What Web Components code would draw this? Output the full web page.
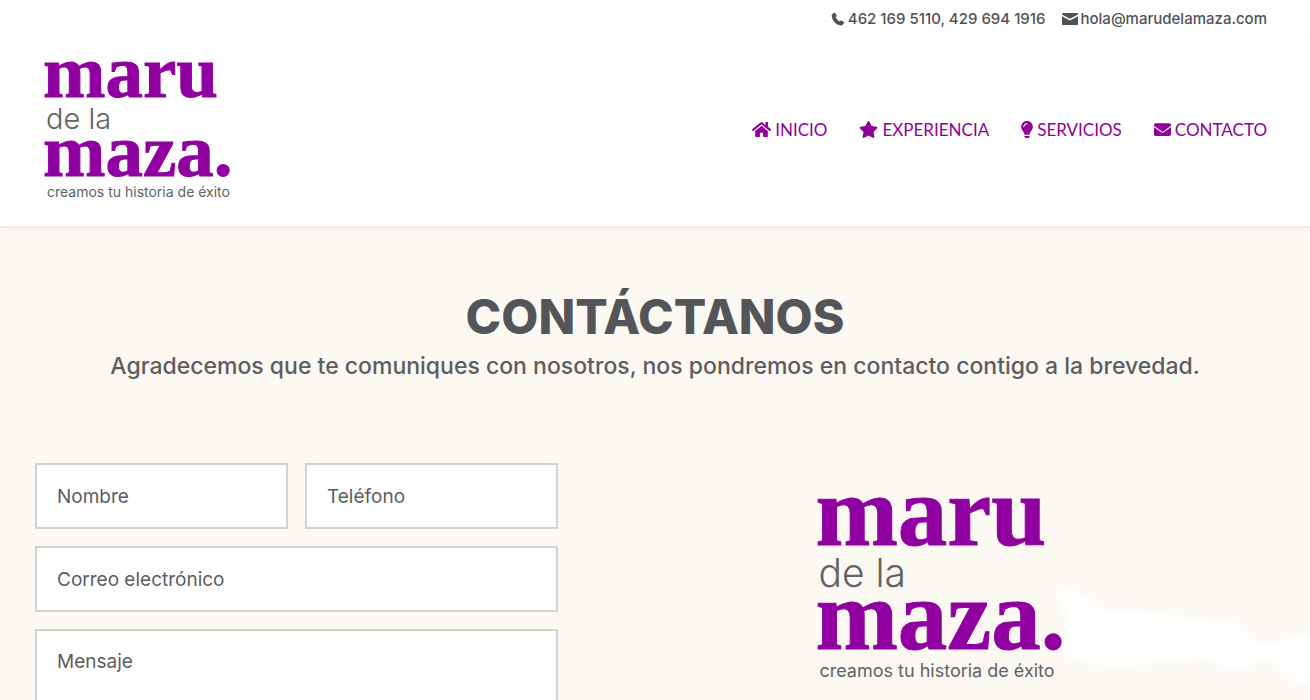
<!DOCTYPE html>
<html lang="es">
<head>
<meta charset="utf-8">
<meta name="viewport" content="width=device-width, initial-scale=1">
<title>Contacto - Maru de la Maza</title>
<style>
  body {
    background: #fcf9f2;
    color: #545559;
    font-family: Inter, "Open Sans", sans-serif;
    margin: 0;
    overflow-x: hidden;
  }
</style>
</head>
<body>

<top-bar>
  <contact-link icon="phone" href="tel:4621695110">462 169 5110, 429 694 1916</contact-link>
  <contact-link icon="mail" href="mailto:hola@marudelamaza.com">hola@marudelamaza.com</contact-link>
</top-bar>

<site-header>
  <brand-logo slot="logo"></brand-logo>
  <nav-link icon="home" href="#inicio">INICIO</nav-link>
  <nav-link icon="star" href="#experiencia">EXPERIENCIA</nav-link>
  <nav-link icon="bulb" href="#servicios">SERVICIOS</nav-link>
  <nav-link icon="envelope" href="#contacto">CONTACTO</nav-link>
</site-header>

<contact-section>
  <span slot="title">CONTÁCTANOS</span>
  <span slot="intro">Agradecemos que te comuniques con nosotros, nos pondremos en contacto contigo a la brevedad.</span>
  <contact-form slot="form"></contact-form>
  <brand-logo slot="brand" large></brand-logo>
</contact-section>

<script>
// icons.js

const ICONS = {
  phone: `<svg width="14" height="14" viewBox="0 0 14 14"><path fill="currentColor" d="M1 2.6 3.1.7q.5-.3.9.2l1.700 2.500q.3.5-.1.9l-1 .9q1.300 2.700 3.900 4.200l1-.9q.5-.4.9-.1l2.500 1.700q.4.4.1.9l-1.600 2q-.5.600-1.500.500Q2.400 12.200.7 4.200.5 3.200 1 2.600z"/></svg>`,
  mail: `<svg width="16" height="12" viewBox="0 0 16 12"><path fill="currentColor" d="M1 0h14q1 0 1 1v.6L8 5.800 0 1.600V1q0-1 1-1zM0 3.200 8 7.400l8-4.200V11q0 1-1 1H1q-1 0-1-1z"/></svg>`,
  home: `<svg width="19" height="17" viewBox="0 0 576 512"><path fill="currentColor" d="M280.400 148.300 96 300.100V464a16 16 0 0 0 16 16l112.100-.3a16 16 0 0 0 15.900-16V368a16 16 0 0 1 16-16h64a16 16 0 0 1 16 16v95.600a16 16 0 0 0 16 16.100L464 480a16 16 0 0 0 16-16V300L295.700 148.300a12.200 12.200 0 0 0-15.300 0zM571.600 251.500 488 182.600V44a12 12 0 0 0-12-12h-56a12 12 0 0 0-12 12v72.600L318.500 43a48 48 0 0 0-61 0L4.300 251.500a12 12 0 0 0-1.600 16.900l25.500 31a12 12 0 0 0 16.900 1.600l235.200-193.700a12.200 12.200 0 0 1 15.300 0L530.900 301a12 12 0 0 0 16.900-1.600l25.500-31a12 12 0 0 0-1.700-16.900z"/></svg>`,
  star: `<svg width="19" height="17" viewBox="0 0 576 512"><path fill="currentColor" d="M259.300 17.800 194 150.200 47.900 171.500c-26.200 3.800-36.700 36.100-17.700 54.600l105.700 103-25 145.500c-4.500 26.300 23.200 46 46.400 33.700L288 439.600l130.700 68.700c23.200 12.200 50.900-7.400 46.400-33.700l-25-145.500 105.700-103c19-18.500 8.500-50.800-17.700-54.600L382 150.200 316.700 17.800c-11.700-23.600-45.600-23.900-57.400 0z"/></svg>`,
  bulb: `<svg width="12" height="17" viewBox="0 0 352 512"><path fill="currentColor" d="M96 454.400V464q0 10 6 18l10 16q9 14 26 14h76q17 0 26-14l10-16q6-8 6-18v-9.600zM0 176c0 44 16 85 43 116 17 19 43 60 53 93v29h160v-29c10-33 36-74 53-93 27-31 43-72 43-116C352 79 273 0 176 0 73 0 0 83 0 176zm176-80c-44 0-80 36-80 80 0 9-7 16-16 16s-16-7-16-16c0-62 50-112 112-112 9 0 16 7 16 16s-7 16-16 16z"/></svg>`,
  envelope: `<svg width="17" height="17" viewBox="0 0 512 512"><path fill="currentColor" d="M502.300 190.800c3.900-3.100 9.700-.2 9.700 4.700V400a48 48 0 0 1-48 48H48a48 48 0 0 1-48-48V195.600c0-5 5.700-7.800 9.700-4.700 22.400 17.400 52.100 39.500 154.100 113.600 21.100 15.400 56.700 47.800 92.200 47.600 35.700.3 72-32.800 92.300-47.600 102-74.100 131.600-96.300 154-113.700zM256 320c23.200.4 56.600-29.200 73.400-41.400 132.700-96.300 142.800-104.700 173.400-128.700a24 24 0 0 0 9.200-18.900v-19a48 48 0 0 0-48-48H48a48 48 0 0 0-48 48v19c0 7.400 3.400 14.300 9.200 18.900 30.600 23.900 40.700 32.400 173.400 128.700 16.800 12.200 50.200 41.800 73.400 41.400z"/></svg>`
};

// top-bar.js

class TopBar extends HTMLElement {
  constructor() {
    super();
    this.attachShadow({mode: 'open'}).innerHTML = `
      <style>
      :host {
        background: white;
        display: block;
      }

      .bar {
        align-items: center;
        display: flex;
        flex-wrap: wrap;
        gap: 16px;
        justify-content: flex-end;
        min-height: 37px;
        padding: 0 43px;
      }
      </style>

      <div class="bar"><slot></slot></div>
    `;
  }
}
customElements.define('top-bar', TopBar);

class ContactLink extends HTMLElement {
  constructor() {
    super();
    this.attachShadow({mode: 'open'}).innerHTML = `
      <style>
      :host {
        display: block;
      }

      a {
        align-items: center;
        color: #505156;
        display: flex;
        font-size: 15px;
        font-weight: 500;
        gap: 3px;
        line-height: 20px;
        text-decoration: none;
      }
      </style>

      <a href="${this.getAttribute('href')}">${ICONS[this.getAttribute('icon')]}<slot></slot></a>
    `;
  }
}
customElements.define('contact-link', ContactLink);

// site-header.js

class SiteHeader extends HTMLElement {
  constructor() {
    super();
    this.attachShadow({mode: 'open'}).innerHTML = `
      <style>
      :host {
        display: block;
      }

      header {
        align-items: center;
        background: white;
        border-bottom: 2px solid #ececec;
        box-shadow: 0 2px 6px rgb(0,0,0,0.04);
        display: flex;
        flex-wrap: wrap;
        justify-content: space-between;
        padding: 20px 43px 24px;
      }

      nav {
        display: flex;
        flex-wrap: wrap;
        gap: 32px;
      }
      </style>

      <header>
        <slot name="logo"></slot>
        <nav><slot></slot></nav>
      </header>
    `;
  }
}
customElements.define('site-header', SiteHeader);

class NavLink extends HTMLElement {
  constructor() {
    super();
    this.attachShadow({mode: 'open'}).innerHTML = `
      <style>
      :host {
        display: block;
      }

      a {
        align-items: center;
        color: #90009a;
        display: flex;
        font-family: Lato, sans-serif;
        font-size: 17px;
        gap: 4px;
        line-height: 24px;
        text-decoration: none;
      }

      a:hover {
        opacity: 0.7;
      }
      </style>

      <a href="${this.getAttribute('href')}">${ICONS[this.getAttribute('icon')]}<slot></slot></a>
    `;
  }
}
customElements.define('nav-link', NavLink);

// brand-logo.js

class BrandLogo extends HTMLElement {
  constructor() {
    super();
    this.attachShadow({mode: 'open'}).innerHTML = `
      <style>
      :host {
        display: block;
        white-space: nowrap;
      }

      .mark {
        color: #9000a0;
        font-family: "Liberation Serif", serif;
        font-size: 75px;
        font-weight: bold;
        line-height: 30px;
        -webkit-text-stroke: 1px #9000a0;
      }

      .small {
        color: #626366;
        font-size: 29px;
        font-weight: 300;
        line-height: 34px;
        margin-top: 15px;
        padding-left: 3px;
      }

      .tagline {
        color: #626366;
        font-size: 14px;
        line-height: 20px;
        margin-top: 16px;
        padding-left: 4px;
      }

      :host([large]) .mark {
        font-size: 99px;
        line-height: 40px;
      }

      :host([large]) .small {
        font-size: 39px;
        line-height: 46px;
        margin-top: 18px;
      }

      :host([large]) .tagline {
        font-size: 18px;
        line-height: 26px;
        margin-top: 22px;
      }
      </style>

      <div class="mark">maru</div>
      <div class="small">de la</div>
      <div class="mark">maza.</div>
      <div class="tagline">creamos tu historia de éxito</div>
    `;
  }
}
customElements.define('brand-logo', BrandLogo);

// contact-form.js

class ContactForm extends HTMLElement {
  constructor() {
    super();
    this.attachShadow({mode: 'open'}).innerHTML = `
      <style>
      :host {
        display: block;
      }

      form {
        display: grid;
        gap: 17px;
        grid-template-columns: 1fr 1fr;
      }

      input, textarea {
        background: white;
        border: 2px solid #d2d2d2;
        border-radius: 0;
        box-sizing: border-box;
        color: #5c5d60;
        font: 19px/28px Inter, sans-serif;
        margin: 0;
        min-width: 0;
        padding: 17px 20px;
        width: 100%;
      }

      input {
        height: 66px;
      }

      textarea {
        display: block;
        height: 180px;
        resize: none;
      }

      .wide {
        grid-column: 1 / -1;
      }

      ::placeholder {
        color: #5c5d60;
        opacity: 1;
      }
      </style>

      <form>
        <input type="text" name="nombre" placeholder="Nombre" aria-label="Nombre">
        <input type="tel" name="telefono" placeholder="Teléfono" aria-label="Teléfono">
        <input class="wide" type="email" name="correo" placeholder="Correo electrónico" aria-label="Correo electrónico">
        <textarea class="wide" name="mensaje" placeholder="Mensaje" aria-label="Mensaje"></textarea>
      </form>
    `;
  }
}
customElements.define('contact-form', ContactForm);

// contact-section.js

class ContactSection extends HTMLElement {
  constructor() {
    super();
    this.attachShadow({mode: 'open'}).innerHTML = `
      <style>
      :host {
        display: block;
      }

      section {
        padding: 60px 35px 40px;
      }

      h1, p {
        margin: 0;
        text-align: center;
      }

      h1 {
        font-size: 48px;
        font-weight: 800;
        line-height: 58px;
      }

      p {
        color: #5c5d61;
        font-size: 23px;
        font-weight: 500;
        line-height: 40px;
      }

      .columns {
        display: grid;
        gap: 48px;
        grid-template-columns: 523fr 669fr;
        margin-top: 77px;
      }

      .brand {
        display: flex;
        justify-content: center;
        padding-top: 29px;
        position: relative;
      }

      /* soft white brush stroke running off the right edge */
      .brush {
        position: absolute;
        right: -35px;
        top: 107px;
      }

      ::slotted(brand-logo) {
        position: relative;
      }
      </style>

      <section>
        <h1><slot name="title"></slot></h1>
        <p><slot name="intro"></slot></p>
        <div class="columns">
          <slot name="form"></slot>
          <div class="brand">
            <svg class="brush" width="270" height="130" viewBox="0 0 270 130" aria-hidden="true">
              <defs><filter id="soft" x="-10%" y="-20%" width="120%" height="140%"><feGaussianBlur stdDeviation="4"/></filter></defs>
              <path fill="white" filter="url(#soft)" d="M12 24q24-9 42 8l6 10 26-4 30 6 50 5 30 4q10 2 12 12l10 8 24-2 12-6h30v50l-30-2-16-18-20-6-10 10-22 2-16-12-40 4-50 2-42-2-16-12 4-28-4-18z"/>
            </svg>
            <slot name="brand"></slot>
          </div>
        </div>
      </section>
    `;
  }
}
customElements.define('contact-section', ContactSection);
</script>
</body>
</html>
